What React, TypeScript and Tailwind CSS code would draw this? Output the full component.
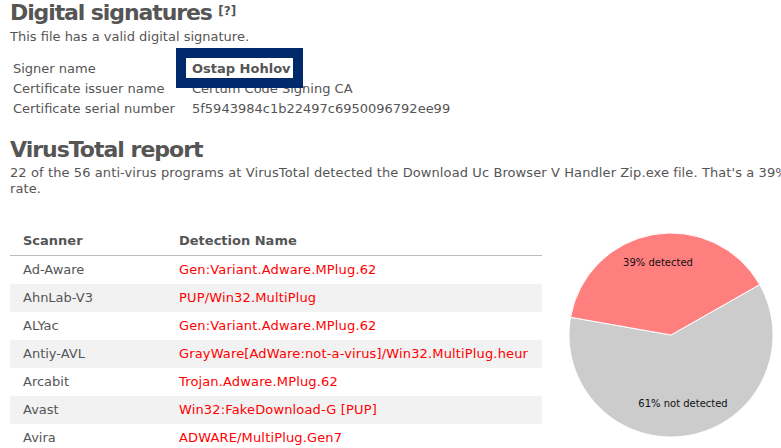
import React from 'react';

// ─── Data ─────────────────────────────────────────

const CERT_ROWS: { label: string; value: string; bold?: boolean }[] = [
  { label: 'Signer name', value: 'Ostap Hohlov', bold: true },
  { label: 'Certificate issuer name', value: 'Certum Code Signing CA' },
  { label: 'Certificate serial number', value: '5f5943984c1b22497c6950096792ee99' },
];

const DETECTIONS: { scanner: string; name: string }[] = [
  { scanner: 'Ad-Aware', name: 'Gen:Variant.Adware.MPlug.62' },
  { scanner: 'AhnLab-V3', name: 'PUP/Win32.MultiPlug' },
  { scanner: 'ALYac', name: 'Gen:Variant.Adware.MPlug.62' },
  { scanner: 'Antiy-AVL', name: 'GrayWare[AdWare:not-a-virus]/Win32.MultiPlug.heur' },
  { scanner: 'Arcabit', name: 'Trojan.Adware.MPlug.62' },
  { scanner: 'Avast', name: 'Win32:FakeDownload-G [PUP]' },
  { scanner: 'Avira', name: 'ADWARE/MultiPlug.Gen7' },
];

// ─── Pie chart ─────────────────────────────────────────

function DetectionPie() {
  // 39% detected slice runs from 190deg to 330deg (screen angles, y down)
  const cx = 105, cy = 105, r = 102;
  const a0 = (190 * Math.PI) / 180;
  const a1 = (330.4 * Math.PI) / 180;
  const p0 = [cx + r * Math.cos(a0), cy + r * Math.sin(a0)];
  const p1 = [cx + r * Math.cos(a1), cy + r * Math.sin(a1)];
  return (
    <svg width="215" height="215" viewBox="0 0 215 215" className="shrink-0 ml-[24px] mt-[3px]">
      <path
        d={`M${cx},${cy} L${p1[0]},${p1[1]} A${r},${r} 0 1 1 ${p0[0]},${p0[1]} Z`}
        fill="#cccccc"
        stroke="#ffffff"
        strokeWidth="1"
      />
      <path
        d={`M${cx},${cy} L${p0[0]},${p0[1]} A${r},${r} 0 0 1 ${p1[0]},${p1[1]} Z`}
        fill="#ff7f7f"
        stroke="#ffffff"
        strokeWidth="1"
      />
      <text x="92" y="36" textAnchor="middle" fontSize="10" fill="#111" fontFamily="'DejaVu Sans', sans-serif">
        39% detected
      </text>
      <text x="117" y="177" textAnchor="middle" fontSize="10" fill="#111" fontFamily="'DejaVu Sans', sans-serif">
        61% not detected
      </text>
    </svg>
  );
}

export default function App() {
  return (
    <div className="w-[781px] h-[448px] overflow-hidden bg-white text-[#555] font-['DejaVu_Sans',Verdana,sans-serif]">
      <div className="px-[10px] w-[900px]">
        {/* Digital signatures */}
        <h2 className="text-[22px] leading-[26px] font-bold tracking-[-1.1px] text-[#555]">
          Digital signatures{' '}
          <span className="inline-block align-top text-[12px] leading-[12px] mt-[5px] tracking-normal font-bold text-[#555]">[?]</span>
        </h2>
        <p className="text-[13px] leading-[16px] mt-[3px]">This file has a valid digital signature.</p>

        <div className="relative mt-[14px]">
          <table className="text-[13px] leading-[20px] border-collapse">
            <tbody>
              {CERT_ROWS.map(row => (
                <tr key={row.label} className="h-[20px]">
                  <td className="pl-[3px] w-[182px] p-0">{row.label}</td>
                  <td className={`p-0 ${row.bold ? 'font-bold' : ''}`}>{row.value}</td>
                </tr>
              ))}
            </tbody>
          </table>
          {/* highlight box over the signer */}
          <div className="absolute left-[166px] top-[-11px] w-[127px] h-[40px] border-[10px] border-[#00296b]" />
        </div>

        {/* VirusTotal report */}
        <h2 className="text-[22px] leading-[26px] font-bold tracking-[-1px] text-[#555] mt-[18px]">VirusTotal report</h2>
        <p className="text-[13px] leading-[16px] mt-[2px] tracking-[0.1px]">
          22 of the 56 anti-virus programs at VirusTotal detected the Download Uc Browser V Handler Zip.exe file. That's a 39% detection
          <br />
          rate.
        </p>

        <div className="flex items-start mt-[30px]">
          <table className="w-[532px] shrink-0 text-[13px] leading-[28px] border-collapse">
            <thead>
              <tr className="border-b border-[#bdbdbd]">
                <th className="text-left font-bold pl-[13px] w-[169px] h-[28px] p-0">Scanner</th>
                <th className="text-left font-bold p-0">Detection Name</th>
              </tr>
            </thead>
            <tbody>
              {DETECTIONS.map((d, i) => (
                <tr key={d.scanner} className={i % 2 === 1 ? 'bg-[#f2f2f2]' : 'bg-white'}>
                  <td className="pl-[13px] h-[28px] p-0">{d.scanner}</td>
                  <td className="p-0 text-[#ff0000] tracking-[0.15px]">{d.name}</td>
                </tr>
              ))}
            </tbody>
          </table>
          <DetectionPie />
        </div>
      </div>
    </div>
  );
}
